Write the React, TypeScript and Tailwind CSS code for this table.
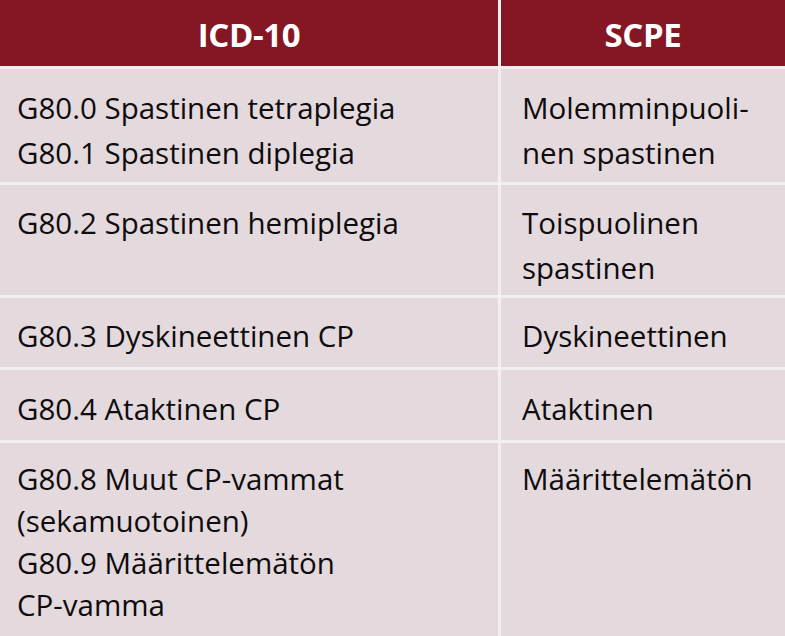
export default function App() {
  return (
    <div
      className="w-[785px] h-[636px] overflow-hidden bg-[#f3eff0] grid grid-cols-[498px_1fr] grid-rows-[66px_113px_110px_69px_70px_1fr] gap-[3px] text-[#0e0c0e]"
      style={{ fontFamily: '"Open Sans", "Noto Sans", sans-serif' }}
    >
      <div className="bg-[#851724] flex items-center justify-center text-white font-bold text-[33px] tracking-[-0.4px] pt-1">ICD-10</div>
      <div className="bg-[#851724] flex items-center justify-center text-white font-bold text-[33px] tracking-[-0.4px] pt-1">SCPE</div>

      <div className="bg-[#e4d9dc] pl-[17px] pt-[16px] text-[29.5px] leading-[45px]">
        <div>G80.0 Spastinen tetraplegia</div>
        <div>G80.1 Spastinen diplegia</div>
      </div>
      <div className="bg-[#e4d9dc] pl-[21px] pt-[16px] text-[29.5px] leading-[45px]">
        <div>Molemminpuoli-</div>
        <div>nen spastinen</div>
      </div>

      <div className="bg-[#e4d9dc] pl-[17px] pt-[15px] text-[29.5px] leading-[45px]">
        <div>G80.2 Spastinen hemiplegia</div>
      </div>
      <div className="bg-[#e4d9dc] pl-[21px] pt-[15px] text-[29.5px] leading-[45px]">
        <div>Toispuolinen</div>
        <div>spastinen</div>
      </div>

      <div className="bg-[#e4d9dc] pl-[17px] pt-[15px] text-[29.5px] leading-[45px]">
        <div>G80.3 Dyskineettinen CP</div>
      </div>
      <div className="bg-[#e4d9dc] pl-[21px] pt-[15px] text-[29.5px] leading-[45px]">
        <div>Dyskineettinen</div>
      </div>

      <div className="bg-[#e4d9dc] pl-[17px] pt-[16px] text-[29.5px] leading-[45px]">
        <div>G80.4 Ataktinen CP</div>
      </div>
      <div className="bg-[#e4d9dc] pl-[21px] pt-[16px] text-[29.5px] leading-[45px]">
        <div>Ataktinen</div>
      </div>

      <div className="bg-[#e4d9dc] pl-[17px] pt-[15px] text-[29.5px] leading-[42px]">
        <div>G80.8 Muut CP-vammat</div>
        <div>(sekamuotoinen)</div>
        <div>G80.9 Määrittelemätön</div>
        <div>CP-vamma</div>
      </div>
      <div className="bg-[#e4d9dc] pl-[21px] pt-[15px] text-[29.5px] leading-[42px]">
        <div>Määrittelemätön</div>
      </div>
    </div>
  );
}
